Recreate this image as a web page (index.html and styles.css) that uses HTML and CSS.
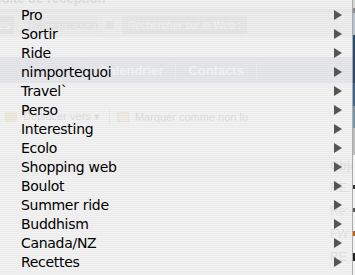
FILE: index.html
```html
<!DOCTYPE html>
<html lang="fr">
<head>
    <meta charset="UTF-8">
    <title>Dossiers</title>
    <link rel="stylesheet" href="styles.css">
</head>
<body>

    <div class="screen">

        <!-- Mail page behind the menu -->
        <div class="mail" aria-hidden="true">
            <div class="mail-title"><div class="mail-title-text">Boîte de réception</div></div>

            <div class="toolbar">
                <span class="tb-btn tb-first">Préférences</span>
                <span class="tb-btn tb-logout">Déconnexion</span>
                <span class="tb-icon"></span>
                <span class="tb-search">Rechercher sur le Web :</span>
            </div>

            <div class="nav">
                <span class="tab tab-current">Courrier</span>
                <span class="tab">Calendrier</span>
                <span class="tab">Contacts</span>
            </div>

            <div class="actions">
                <span class="act-icon act-move"></span>
                <span class="act-text">Déplacer vers ▾</span>
                <span class="act-sep"></span>
                <span class="act-icon act-mail"></span>
                <span class="act-text">Marquer comme non lu</span>
            </div>

            <div class="list">
                <div class="list-head"><span class="subj">Objet</span></div>
                <div class="list-row"><span class="subj">RE: Canada</span></div>
                <div class="list-row"><span class="subj">Re: Canada</span></div>
                <div class="list-row"><span class="subj">FW: Afrique</span></div>
                <div class="list-row"><span class="subj">RE : Boulot</span></div>
            </div>
        </div>
        <div class="side"></div>

        <!-- Folder menu -->
        <div class="menu">
            <div class="item"><span>Pro</span><i class="arrow"></i></div>
            <div class="item"><span>Sortir</span><i class="arrow"></i></div>
            <div class="item"><span>Ride</span><i class="arrow"></i></div>
            <div class="item"><span>nimportequoi</span><i class="arrow"></i></div>
            <div class="item"><span>Travel`</span><i class="arrow"></i></div>
            <div class="item"><span>Perso</span><i class="arrow"></i></div>
            <div class="item"><span>Interesting</span><i class="arrow"></i></div>
            <div class="item"><span>Ecolo</span><i class="arrow"></i></div>
            <div class="item"><span>Shopping web</span><i class="arrow"></i></div>
            <div class="item"><span>Boulot</span><i class="arrow"></i></div>
            <div class="item"><span>Summer ride</span><i class="arrow"></i></div>
            <div class="item"><span>Buddhism</span><i class="arrow"></i></div>
            <div class="item"><span>Canada/NZ</span><i class="arrow"></i></div>
            <div class="item"><span>Recettes</span><i class="arrow"></i></div>
        </div>

    </div>

</body>
</html>
```

FILE: styles.css
```css
* {
    box-sizing: border-box;
}

body {
    margin: 0;
    font-family: "DejaVu Sans", sans-serif;
    background: #fff;
}

.screen {
    position: relative;
    display: flex;
    width: 355px;
    height: 275px;
    overflow: hidden;
    background: #fff;
}

/* Mail page seen through the menu */
.mail {
    flex: 1;
    overflow: hidden;
    font-family: "Liberation Sans", Arial, sans-serif;
    white-space: nowrap;
}

.mail-title {
    height: 13px;
    background: #f2f2f2;
    border-bottom: 4px solid #b4b4b4;
    overflow: hidden;
}

.mail-title-text {
    margin: -8px 0 0 -8px;
    font-size: 13px;
    line-height: 13px;
    font-weight: bold;
    color: #555;
}

.toolbar {
    display: flex;
    align-items: center;
    height: 24px;
    background: #d2d8de;
}

.tb-btn {
    padding: 2px 4px;
    font-size: 12px;
}

.tb-first {
    margin-left: -59px;
    background: #9a9a9a;
    color: #fff;
}

.tb-logout {
    margin-left: 10px;
    background: #c4c4c4;
    color: #777;
}

.tb-icon {
    width: 8px;
    height: 8px;
    margin-left: 4px;
    background: #999;
}

.tb-search {
    margin-left: 8px;
    padding: 3px 6px;
    font-size: 10.5px;
    background: #a2a2a2;
    color: #fff;
}

.nav {
    display: flex;
    align-items: center;
    height: 26px;
    margin-top: 20px;
    padding-left: 11px;
    background: #96a8ba;
}

.tab {
    padding: 0 12px;
    font-size: 13px;
    font-weight: bold;
    color: #fff;
    border-right: 1px solid rgba(255, 255, 255, 0.5);
}

.tab-current {
    width: 76px;
    font-weight: normal;
    color: #7d8fa2;
}

.actions {
    display: flex;
    align-items: center;
    height: 23px;
    margin-top: 22px;
    padding-left: 5px;
    font-size: 11px;
    color: #555;
}

.act-icon {
    width: 12px;
    height: 10px;
    margin-right: 6px;
}

.act-move {
    background: #d8b860;
}

.act-mail {
    border: 1px solid #c4a050;
    background: #ecd088;
}

.act-sep {
    width: 1px;
    height: 14px;
    margin: 0 7px 0 9px;
    background: #999;
}

.list {
    margin-top: 27px;
    font-size: 12px;
    color: #777;
}

.list-head {
    height: 22px;
    line-height: 22px;
    background: #f0f0f0;
    font-weight: bold;
}

.list-row {
    height: 23px;
    line-height: 23px;
}

.subj {
    margin-left: 330px;
}

/* strip of the page still visible right of the menu */
.side {
    width: 2px;
    background: linear-gradient(to bottom,
        #d6d6d6 0 8px, #8c8c8c 8px 13px, #b8c3ce 13px 35px,
        #2a4d72 35px 83px, #3b6890 83px 106px, #7a96af 106px 128px,
        #bdbdbd 128px 155px, #f5f5f5 155px 185px, #333 185px 189px,
        #f5f5f5 189px 208px, #555 208px 212px, #f5f5f5 212px 231px,
        #b5651d 231px 236px, #f5f5f5 236px 253px, #222 253px 261px,
        #f5f5f5 261px);
}

/* Translucent folder menu */
.menu {
    position: absolute;
    top: 0;
    left: 0;
    width: 353px;
    height: 275px;
    padding-top: 5px;
    background: repeating-linear-gradient(to bottom,
        rgba(240, 240, 240, 0.88) 0 1px,
        rgba(233, 233, 233, 0.88) 1px 2px);
    border-right: 1px solid rgba(90, 90, 90, 0.45);
}

.item {
    display: flex;
    align-items: center;
    justify-content: space-between;
    height: 19px;
    padding: 0 10px 0 21px;
    font-size: 14px;
    letter-spacing: -0.3px;
    color: #000;
}

.arrow {
    width: 0;
    height: 0;
    border-left: 8px solid #555;
    border-top: 5px solid transparent;
    border-bottom: 5px solid transparent;
}
```
